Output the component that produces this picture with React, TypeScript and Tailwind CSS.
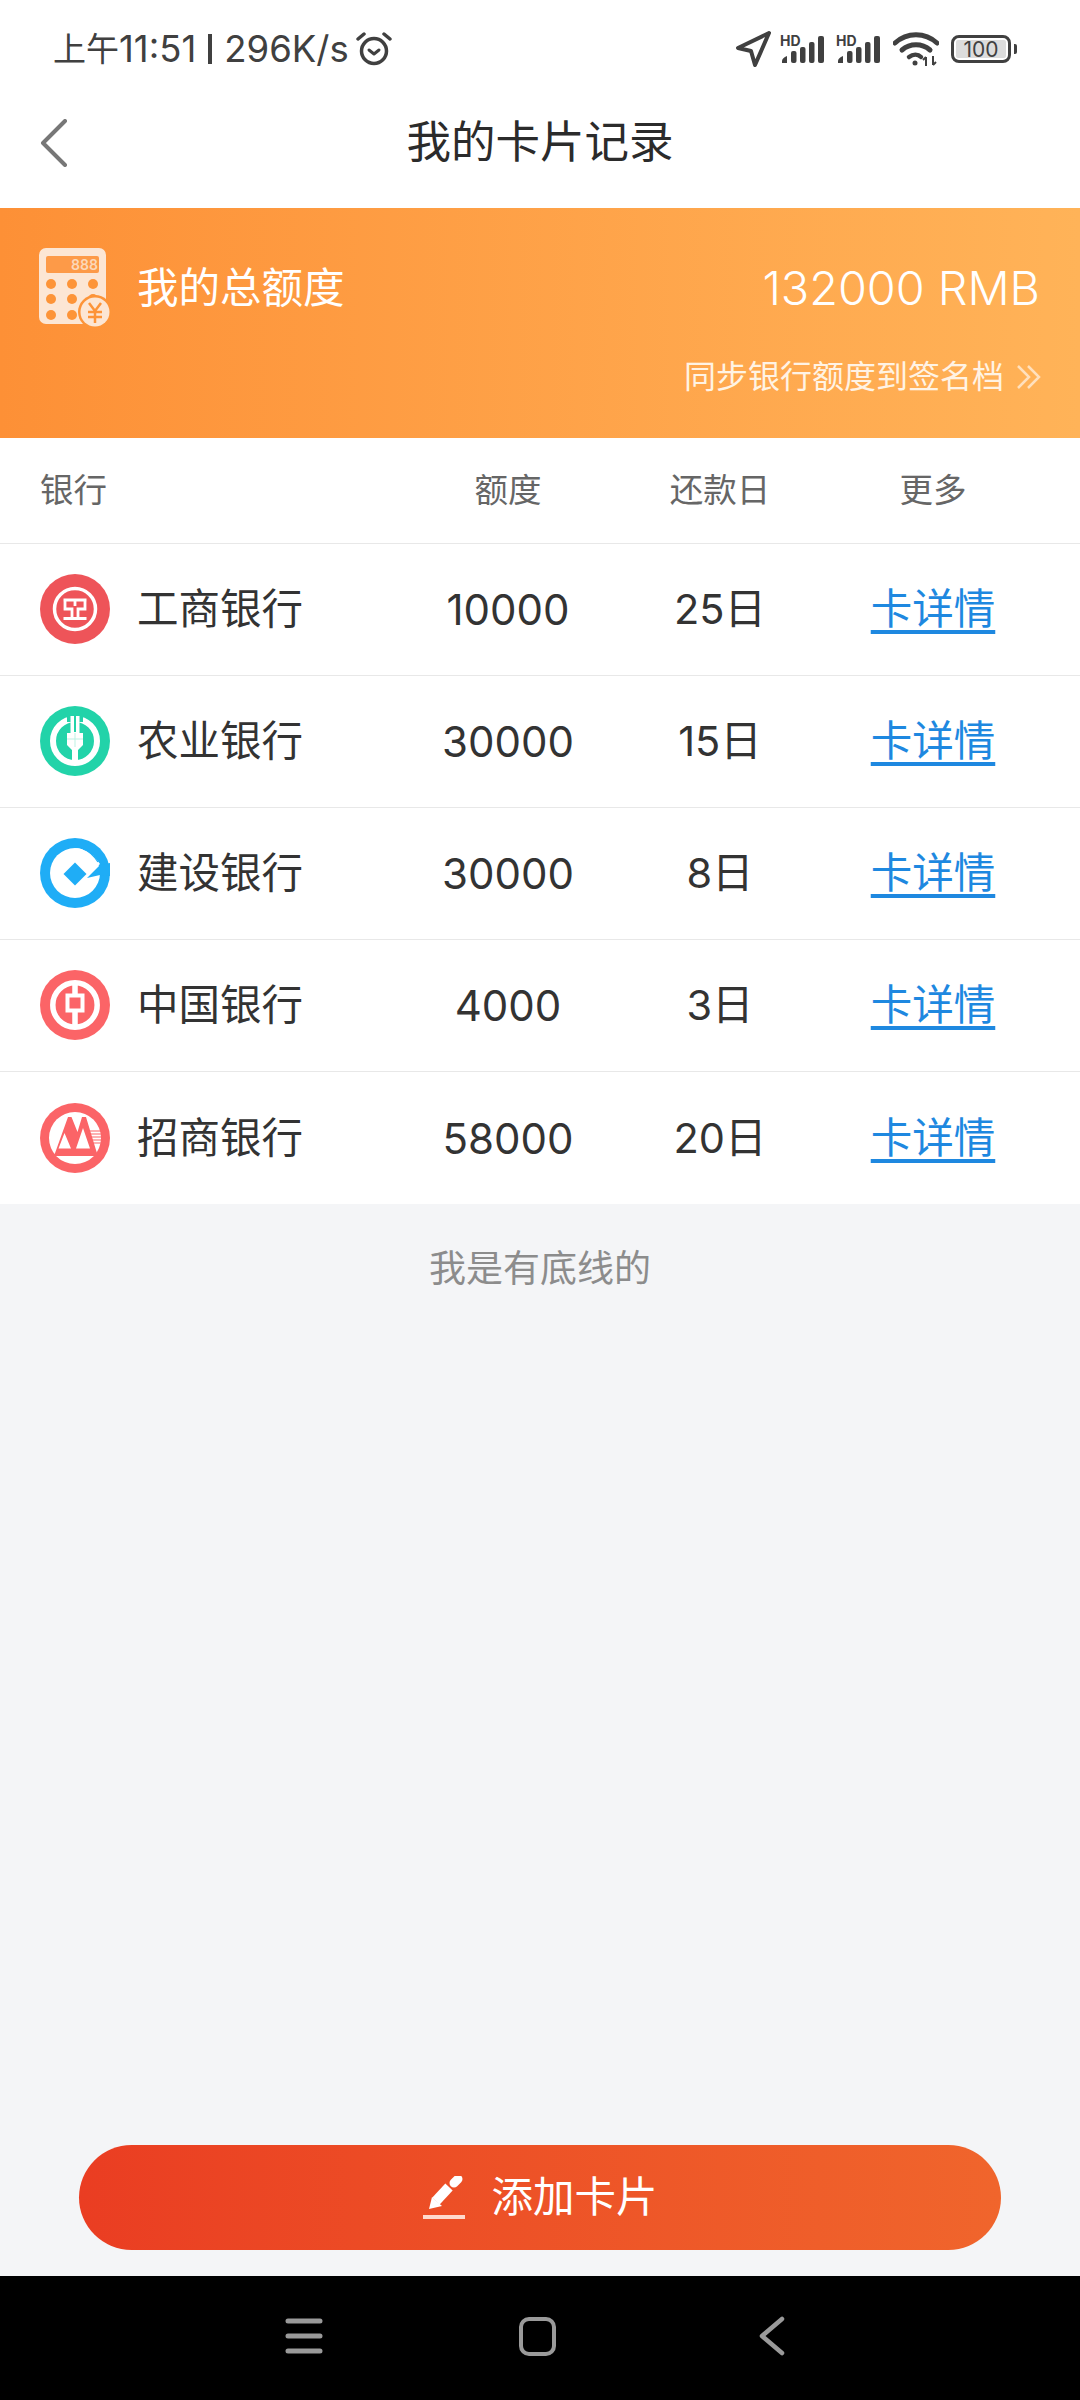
const font = "font-['Inter','Noto_Sans_CJK_SC',sans-serif]";

const IcbcLogo = () => (
  <svg width="70" height="70" viewBox="0 0 70 70">
    <circle cx="35" cy="35" r="35" fill="#ee5459" />
    <circle cx="35" cy="35" r="20.500" fill="none" stroke="#fff" strokeWidth="3.500" />
    <path
      d="M23.500 26H46.500M23.500 44.500H46.500M25 26v9h7v9.500M45 26v9h-7v9.500M35 26v6"
      fill="none"
      stroke="#fff"
      strokeWidth="2.800"
    />
  </svg>
);

const AbcLogo = () => (
  <svg width="70" height="70" viewBox="0 0 70 70">
    <circle cx="35" cy="35" r="35" fill="#22d3a9" />
    <circle cx="35" cy="35" r="22" fill="none" stroke="#fff" strokeWidth="6" />
    <path d="M27 8h16v8H27z" fill="#22d3a9" />
    <path d="M30.500 10h9v18h-9z" fill="#fff" />
    <path d="M35 10v16" stroke="#22d3a9" strokeWidth="2" />
    <path d="M27 27h16v12l-5 5v14h-6V44l-5-5z" fill="#fff" />
    <path d="M27 33h16M35 27v14" stroke="#bdf1e3" strokeWidth="1" />
  </svg>
);

const CcbLogo = () => (
  <svg width="70" height="70" viewBox="0 0 70 70">
    <circle cx="35" cy="35" r="35" fill="#1fadf6" />
    <circle cx="35" cy="35" r="25" fill="#fff" />
    <path d="M35 24.500l11.500 11.500L35 47.500 23.500 36z" fill="#1fadf6" />
    <path d="M47 40l13-13 10-2v13l-10-1z" fill="#1fadf6" />
    <path d="M35 10c11 1 19 7 25 16l-5 4c-5-9-11-16-20-20z" fill="#fff" />
    <path d="M43 11c6 2 11 7 15 13" fill="none" stroke="#1fadf6" strokeWidth="1.300" />
  </svg>
);

const BocLogo = () => (
  <svg width="70" height="70" viewBox="0 0 70 70">
    <circle cx="35" cy="35" r="35" fill="#fb6467" />
    <circle cx="35" cy="35" r="22.200" fill="none" stroke="#fff" strokeWidth="5.500" />
    <rect x="27.500" y="25.500" width="15" height="15" fill="none" stroke="#fff" strokeWidth="4" />
    <path d="M35 12v12M35 42v16" stroke="#fff" strokeWidth="5.500" />
  </svg>
);

const CmbLogo = () => (
  <svg width="70" height="70" viewBox="0 0 70 70">
    <circle cx="35" cy="35" r="35" fill="#fb6467" />
    <circle cx="35" cy="35" r="26" fill="#fff" />
    <path d="M14 53L28 14h3.500l6 15L42 14h4l10 33 2 6z" fill="#fb6467" />
    <path d="M24.500 30l-6 15.500h12.500zM43 25l-7 20.500h14z" fill="#fff" />
    <path d="M48 28h13M49 31h13M50 34h12M51 37h11M52 40h9" stroke="#fb6467" strokeWidth="1.200" />
  </svg>
);

const banks = [
  { name: "工商银行", limit: "10000", day: "25日", Logo: IcbcLogo },
  { name: "农业银行", limit: "30000", day: "15日", Logo: AbcLogo },
  { name: "建设银行", limit: "30000", day: "8日", Logo: CcbLogo },
  { name: "中国银行", limit: "4000", day: "3日", Logo: BocLogo },
  { name: "招商银行", limit: "58000", day: "20日", Logo: CmbLogo },
];

const Signal = () => (
  <svg width="47" height="38" viewBox="0 -8 47 38" className="-mt-[8px]">
    <text x="0" y="12" fontSize="14" fontWeight="700" fontFamily="Inter, sans-serif" fill="#404040">
      HD
    </text>
    <path d="M2 29v-2c0-2 2-4 5-5v7z" fill="#404040" />
    <rect x="11" y="17" width="5.500" height="12" rx="2" fill="#404040" />
    <rect x="20" y="13" width="5.500" height="16" rx="2" fill="#404040" />
    <rect x="29" y="8" width="5.500" height="21" rx="2" fill="#404040" />
    <rect x="38" y="2" width="6" height="27" rx="2" fill="#404040" />
  </svg>
);

const StatusBar = () => (
  <div className="flex h-[96px] items-center justify-between pl-[53px] pr-[63px] pt-[2px] text-[#404040]">
    <div className="flex items-center">
      <span className="text-[33px] leading-none">上午</span>
      <span className="text-[36.500px] leading-none">11:51</span>
      <div className="mx-[12px] h-[30px] w-[4px] bg-[#404040]" />
      <span className="text-[36.500px] leading-none">296K/s</span>
      <svg width="36" height="36" viewBox="0 0 36 36" fill="none" stroke="#404040" className="ml-[7px]">
        <circle cx="18" cy="20" r="12.500" strokeWidth="3.500" />
        <path d="M13 19l5 4 5-4" strokeWidth="3" strokeLinecap="round" strokeLinejoin="round" />
        <path d="M2 8l6-5M34 8l-6-5" strokeWidth="3.500" strokeLinecap="round" />
      </svg>
    </div>
    <div className="flex items-center">
      <svg width="36" height="36" viewBox="0 0 36 36" className="mr-[9px]">
        <path
          d="M34 2L3 17l13 3 4 14z"
          fill="none"
          stroke="#404040"
          strokeWidth="4"
          strokeLinejoin="round"
        />
      </svg>
      <Signal />
      <div className="w-[9px]" />
      <Signal />
      <svg width="46" height="34" viewBox="0 0 46 34" className="ml-[10px]" fill="none" stroke="#404040">
        <path d="M2 11c12-11 30-11 42 0" strokeWidth="5" strokeLinecap="round" />
        <path d="M9 18c8-7 20-7 28 0" strokeWidth="5" strokeLinecap="round" />
        <path d="M16 25c4-3 9-3 12 0" strokeWidth="4.500" strokeLinecap="round" />
        <circle cx="22" cy="31" r="2.500" fill="#404040" stroke="none" />
        <path d="M33 34v-9M33 25l-3 3M40 24v9M40 33l3-3" strokeWidth="2" />
      </svg>
      <div className="relative ml-[12px] flex h-[28px] w-[60px] items-center justify-center rounded-[8px] border-[3px] border-[#404040] p-[2px]">
        <span className="flex h-full w-full items-center justify-center rounded-[2px] bg-[#dcdcdc] text-[21px] leading-none">
          100
        </span>
      </div>
      <div className="ml-[3px] h-[10px] w-[3px] rounded-r-[2px] bg-[#404040]" />
    </div>
  </div>
);

const NavHeader = () => (
  <div className="grid h-[112px] grid-cols-[1fr_auto_1fr] items-center px-[40px] pb-[19px]">
    <svg width="28" height="48" viewBox="0 0 28 48" fill="none">
      <path d="M25 2L3 24l22 22" stroke="#777" strokeWidth="4" strokeLinecap="round" strokeLinejoin="round" />
    </svg>
    <div className="text-[44.500px] leading-none text-[#2b2b2b]">我的卡片记录</div>
    <div />
  </div>
);

const CalculatorIcon = () => (
  <svg width="72" height="80" viewBox="0 0 72 80">
    <rect x="0" y="0" width="67" height="76" rx="7" fill="#fce6d4" />
    <rect x="7" y="8" width="53" height="17" rx="2" fill="#fd9a48" />
    <text x="32" y="22" fontSize="14" fontWeight="600" fontFamily="Inter, sans-serif" fill="#fcd8b8">
      888
    </text>
    {[12, 33, 54].map((cx) =>
      [36, 51, 67].map((cy) => <circle key={`${cx}-${cy}`} cx={cx} cy={cy} r="5" fill="#fd9438" />)
    )}
    <circle cx="56" cy="64" r="17" fill="#fd9438" />
    <circle cx="56" cy="64" r="14.500" fill="#fce6d4" />
    <path d="M50 55l6 8 6-8M49 64h14M49 69h14M56 63v12" fill="none" stroke="#fd9438" strokeWidth="2.500" />
  </svg>
);

const App = () => {
  return (
    <div className={`flex h-[2400px] w-[1080px] flex-col bg-[#f4f5f7] ${font}`}>
      <div className="bg-white">
        <StatusBar />
        <NavHeader />
      </div>

      <div className="h-[230px] bg-gradient-to-r from-[#fd9036] to-[#ffb358] pl-[39px] pr-[40px] pt-[40px] text-white">
        <div className="flex items-start justify-between">
          <div className="flex items-start gap-[26px]">
            <CalculatorIcon />
            <span className="mt-[20px] text-[41.500px] leading-none">我的总额度</span>
          </div>
          <span className="mt-[17px] text-[46.800px] font-light leading-none">132000 RMB</span>
        </div>
        <div className="mt-[33px] flex items-center justify-end gap-[12px]">
          <span className="text-[32px] leading-none text-[#fff3e4]">同步银行额度到签名档</span>
          <svg width="26" height="26" viewBox="0 0 26 26" fill="none" stroke="#ffe0bd" strokeWidth="2.500" className="-mr-[2px]">
            <path d="M2 2l11 11L2 24M12 2l11 11-11 11" />
          </svg>
        </div>
      </div>

      <div className="bg-white">
        <div className="grid h-[106px] grid-cols-[362px_212px_212px_1fr] items-center border-b border-[#e8e8e8] px-[40px] text-[33.500px] text-[#666]">
          <span>银行</span>
          <span className="text-center">额度</span>
          <span className="text-center">还款日</span>
          <span className="text-center">更多</span>
        </div>
        {banks.map(({ name, limit, day, Logo }, index) => (
          <div
            key={name}
            className={`grid h-[132px] grid-cols-[362px_212px_212px_1fr] items-center px-[40px] text-[41.500px] text-[#333] ${
              index < banks.length - 1 ? "border-b border-[#e8e8e8]" : ""
            }`}
          >
            <div className="flex items-center gap-[27px]">
              <div className="-mt-[1px] h-[70px] w-[70px]">
                <Logo />
              </div>
              <span>{name}</span>
            </div>
            <span className="text-center text-[42px]">{limit}</span>
            <span className="text-center">{day}</span>
            <span className="text-center text-[#1e88e0] underline underline-offset-[6px]">卡详情</span>
          </div>
        ))}
      </div>

      <div className="flex-1 pt-[46px] text-center text-[37px] leading-none text-[#8c8c8c]">我是有底线的</div>

      <div className="mx-[79px] mb-[26px] flex h-[105px] items-center justify-center gap-[25px] rounded-full bg-gradient-to-r from-[#ea3d22] to-[#f0652c] text-white">
        <svg width="44" height="44" viewBox="0 0 44 44" fill="none">
          <path d="M7 33l3-12 10 9z" fill="#fff" />
          <path d="M14 25l13-14" stroke="#fff" strokeWidth="10" />
          <path d="M32 7l4-4" stroke="#fff" strokeWidth="9" strokeLinecap="round" />
          <path d="M1 41h42" stroke="#ffd9cc" strokeWidth="4" />
        </svg>
        <span className="text-[41.500px] leading-none">添加卡片</span>
      </div>

      <div className="flex h-[124px] items-center bg-black pb-[4px] pl-[285px]">
        <svg width="38" height="36" viewBox="0 0 38 36" fill="none" stroke="#9a9a9a" strokeWidth="5" strokeLinecap="round">
          <path d="M3 3h32M3 18h32M3 33h32" />
        </svg>
        <div className="ml-[196px] h-[39px] w-[37px] rounded-[10px] border-[4px] border-[#9a9a9a]" />
        <svg width="26" height="40" viewBox="0 0 26 40" fill="none" className="ml-[203px]">
          <path d="M23 3L3 20l20 17" stroke="#9a9a9a" strokeWidth="4.500" strokeLinecap="round" strokeLinejoin="round" />
        </svg>
      </div>
    </div>
  );
};

export default App;
